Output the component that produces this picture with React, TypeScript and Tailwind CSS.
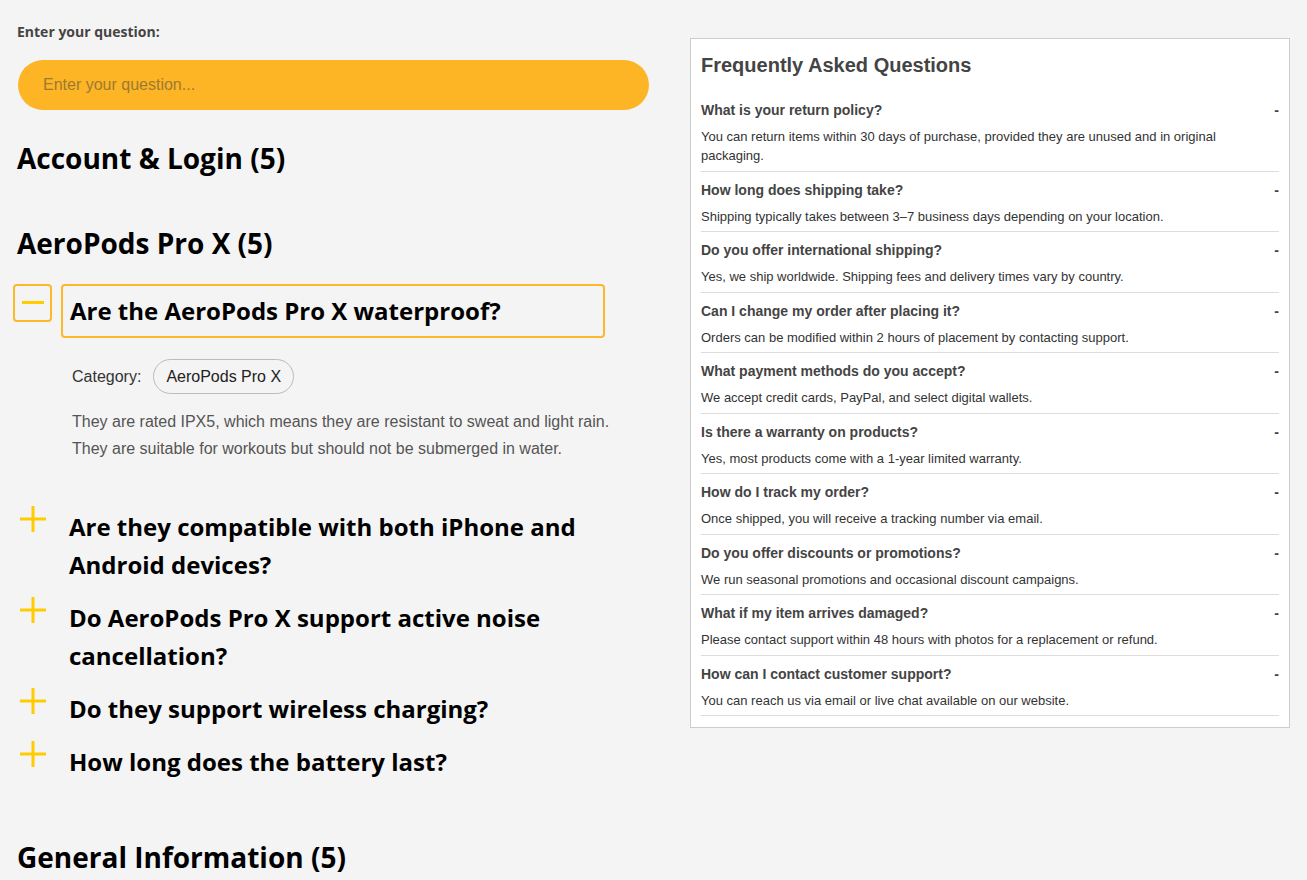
import React from "react";

const HEAD = "font-['Open_Sans','Noto_Sans',sans-serif]";
const ARIAL = "font-['Liberation_Sans',Arial,sans-serif]";

const faqs: [string, string][] = [
  ["What is your return policy?", "You can return items within 30 days of purchase, provided they are unused and in original packaging."],
  ["How long does shipping take?", "Shipping typically takes between 3–7 business days depending on your location."],
  ["Do you offer international shipping?", "Yes, we ship worldwide. Shipping fees and delivery times vary by country."],
  ["Can I change my order after placing it?", "Orders can be modified within 2 hours of placement by contacting support."],
  ["What payment methods do you accept?", "We accept credit cards, PayPal, and select digital wallets."],
  ["Is there a warranty on products?", "Yes, most products come with a 1-year limited warranty."],
  ["How do I track my order?", "Once shipped, you will receive a tracking number via email."],
  ["Do you offer discounts or promotions?", "We run seasonal promotions and occasional discount campaigns."],
  ["What if my item arrives damaged?", "Please contact support within 48 hours with photos for a replacement or refund."],
  ["How can I contact customer support?", "You can reach us via email or live chat available on our website."],
];

const collapsed = [
  "Are they compatible with both iPhone and Android devices?",
  "Do AeroPods Pro X support active noise cancellation?",
  "Do they support wireless charging?",
  "How long does the battery last?",
];

function Plus() {
  return (
    <svg width="26" height="26" viewBox="0 0 26 26">
      <path d="M13 0V26M0 13H26" stroke="#ffcc00" strokeWidth="3" />
    </svg>
  );
}

export default function App() {
  return (
    <div className="min-h-[880px] bg-[#f4f4f4] px-[17px] pt-[22px] flex items-start">
      <div className="w-[633px] shrink-0">
        <label className={`${HEAD} block text-[14px] font-bold text-[#444] leading-[20px]`}>Enter your question:</label>
        <input
          placeholder="Enter your question..."
          className={`${ARIAL} mt-[18px] ml-px block w-[631px] h-[50px] rounded-full bg-[#fdb526] px-[25px] text-[16px] text-[#333] placeholder:text-[#9c7a32] outline-none`}
        />
        <h2 className={`${HEAD} mt-[31px] text-[28px] font-bold leading-[34px] text-black`}>Account &amp; Login (5)</h2>
        <h2 className={`${HEAD} mt-[51px] text-[28px] font-bold leading-[34px] text-black`}>AeroPods Pro X (5)</h2>
        <div className="mt-[24px] ml-[-4px]">
          <div className="flex items-start gap-[9px]">
            <button className="w-[39px] h-[38px] shrink-0 rounded-[4px] border-2 border-[#fbb829] flex items-start justify-center pt-[15px]">
              <span className="block w-[22px] h-[3px] bg-[#ffcc00]" />
            </button>
            <div className={`${HEAD} w-[544px] rounded-[4px] border-2 border-[#fbb829] px-[7px] py-[6px] text-[24px] font-bold leading-[38px] text-black`}>
              Are the AeroPods Pro X waterproof?
            </div>
          </div>
          <div className={`${ARIAL} pl-[59px] pt-[21px]`}>
            <div className="flex items-center gap-[12px] text-[16px] text-[#333]">
              <span>Category:</span>
              <span className="rounded-full border border-[#bbb] px-[12px] h-[35px] flex items-center text-[#222]">AeroPods Pro X</span>
            </div>
            <p className="mt-[14px] text-[16px] leading-[27px] text-[#555] w-[560px]">
              They are rated IPX5, which means they are resistant to sweat and light rain. They are suitable for workouts but should not be submerged in water.
            </p>
          </div>
          <div className="mt-[38px]">
            {collapsed.map((q) => (
              <div key={q} className="flex items-start gap-[9px]">
                <button className="w-[39px] h-[38px] shrink-0 flex items-center justify-center">
                  <Plus />
                </button>
                <div className={`${HEAD} w-[544px] border-2 border-transparent px-[6px] py-[5.5px] text-[24px] font-bold leading-[38px] text-black`}>
                  {q}
                </div>
              </div>
            ))}
          </div>
        </div>
        <h2 className={`${HEAD} mt-[52px] text-[28px] font-bold leading-[34px] text-black`}>General Information (5)</h2>
      </div>
      <div className={`${ARIAL} ml-[40px] mt-[16px] w-[600px] shrink-0 border border-[#ccc] bg-white px-[10px] pt-[14px] pb-[11px]`}>
        <h3 className="text-[20px] font-bold leading-[24px] text-[#444]">Frequently Asked Questions</h3>
        <div className="mt-[15px]">
          {faqs.map(([q, a]) => (
            <div key={q} className="border-b border-[#ddd] pt-[8px] pb-[5.5px]">
              <div className="flex justify-between text-[14px] font-bold leading-[20px] text-[#444]">
                <span>{q}</span>
                <span>-</span>
              </div>
              <p className="mt-[7px] text-[13px] leading-[19px] text-[#333]">{a}</p>
            </div>
          ))}
        </div>
      </div>
    </div>
  );
}
